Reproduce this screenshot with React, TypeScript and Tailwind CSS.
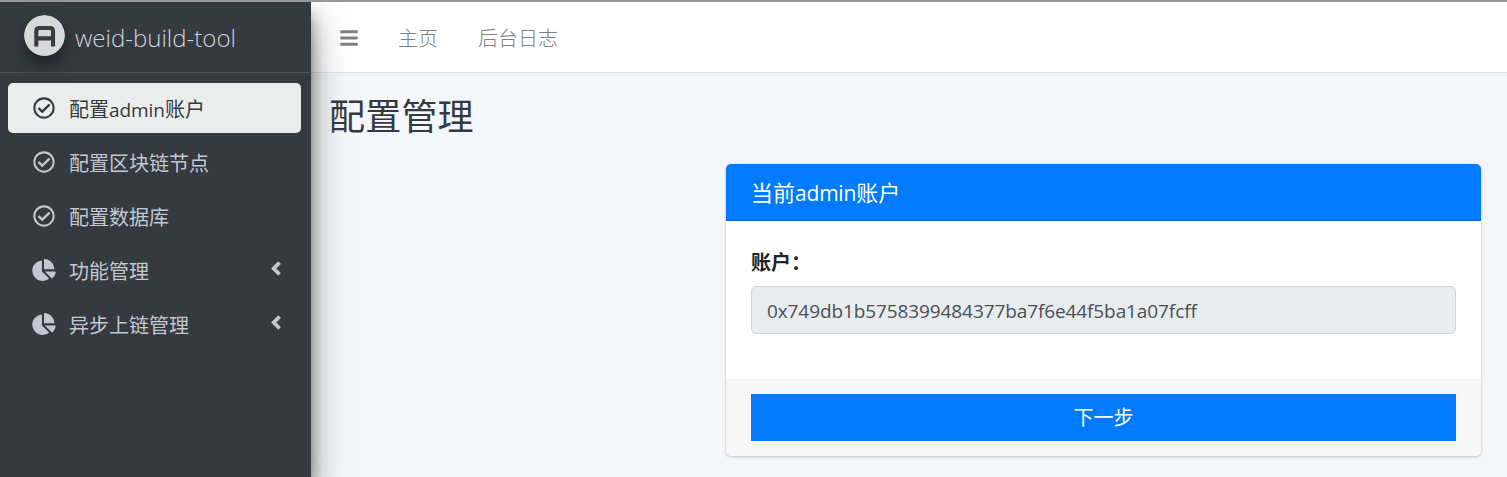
import { FaAngleLeft, FaBars, FaChartPie, FaRegCheckCircle } from 'react-icons/fa';
import type { ReactNode } from 'react';

type Item = { id: string; label: ReactNode; kind: 'check' | 'pie'; active?: boolean };

const items: Item[] = [
  {
    id: 'admin',
    label: (
      <>
        配置<span className="text-[19px] tracking-[-0.05px]">admin</span>账户
      </>
    ),
    kind: 'check',
    active: true,
  },
  { id: 'nodes', label: '配置区块链节点', kind: 'check' },
  { id: 'database', label: '配置数据库', kind: 'check' },
  { id: 'features', label: '功能管理', kind: 'pie' },
  { id: 'async', label: '异步上链管理', kind: 'pie' },
];

function Logo() {
  return (
    <svg
      viewBox="0 0 41 41"
      className="h-[41px] w-[41px] shrink-0 rounded-full shadow-[0_12px_25px_rgba(0,0,0,0.19),0_8px_8px_rgba(0,0,0,0.23)]"
    >
      <circle cx="20.5" cy="20.5" r="20.5" fill="#d7d8da" />
      <path
        d="M12.3 31.5V16q0-3 3-3h10.7q3 0 3 3v15.5M12.3 23.4h16.7"
        fill="none"
        stroke="#3a3c40"
        strokeWidth="4.1"
      />
    </svg>
  );
}

function SideItem({ label, kind, active }: Omit<Item, 'id'>) {
  return (
    <a
      className={
        active
          ? 'flex h-[50px] items-center rounded-[5px] bg-[#ebeded] pl-6 pr-[18px] text-[#343a40]'
          : 'flex h-[50px] items-center rounded-[5px] pl-6 pr-[18px] text-[#c2c7d0]'
      }
    >
      <span className="flex w-6 shrink-0 justify-center">
        {kind === 'check' ? (
          <FaRegCheckCircle className="h-[22px] w-[22px]" />
        ) : (
          <FaChartPie className="h-[22px] w-6" />
        )}
      </span>
      <span className="ml-[13px] mt-[3px] flex-1 text-[20px] leading-[30px]">{label}</span>
      {kind === 'pie' && <FaAngleLeft className="mb-[3px] h-[21px] w-[14px] stroke-current stroke-[18]" />}
    </a>
  );
}

export default function App() {
  return (
    <div className="flex h-[477px] w-[1507px] flex-col overflow-hidden bg-[#f4f6f9] font-['Open_Sans','Noto_Sans_CJK_SC',sans-serif] text-[20px] text-[#212529]">
      <div className="z-20 h-[2px] shrink-0 bg-[#999899]" />
      <div className="flex min-h-0 flex-1">
        <aside className="z-10 w-[311px] shrink-0 bg-[#343a40] shadow-[0_18px_35px_rgba(0,0,0,0.42),0_13px_13px_rgba(0,0,0,0.36)]">
          <div className="flex h-[71px] items-center border-b border-[#4b545c] pb-[3px] pl-6">
            <Logo />
            <span className="ml-[10px] mt-1 text-[24px] font-light leading-[38px] text-[#d0d2d4]">
              weid-build-tool
            </span>
          </div>
          <nav className="flex flex-col gap-1 pl-2 pr-[10px] pt-[10px]">
            {items.map(({ id, ...item }) => (
              <SideItem key={id} {...item} />
            ))}
          </nav>
        </aside>

        <main className="min-w-0 flex-1">
          <header className="flex h-[71px] items-center border-b border-[#dee2e6] bg-white pl-[29px] text-[#808080]">
            <FaBars className="mt-px h-5 w-[18px]" />
            <a className="ml-10 mt-[3px] font-light">主页</a>
            <a className="ml-10 mt-[3px] font-light">后台日志</a>
          </header>
          <h1 className="pl-[18px] pt-[21px] text-[36px] leading-[45px] tracking-[0.2px] text-[#343a40]">配置管理</h1>

          <section className="ml-[415px] mt-[25px] w-[755px] overflow-hidden rounded-[5px] bg-white shadow-[0_0_1px_rgba(0,0,0,0.125),0_1px_3px_rgba(0,0,0,0.2)]">
            <h3 className="h-[57px] border-b border-[#0069d9] bg-[#007bff] pl-[25px] pt-[14px] text-[22px] leading-[28px] text-white">
              当前<span className="text-[21px] tracking-[-0.2px]">admin</span>账户
            </h3>
            <div className="h-[158px] px-[25px] pt-[27px]">
              <label className="block text-[20px] font-bold leading-[30px]">账户：</label>
              <input
                readOnly
                value="0x749db1b5758399484377ba7f6e44f5ba1a07fcff"
                className="mt-2 block h-12 w-full rounded-[5px] border border-[#ced4da] bg-[#e9ecef] pl-[15px] pr-4 pt-px text-[19px] tracking-[-0.1px] text-[#495057] outline-none"
              />
            </div>
            <div className="h-[77px] bg-[#f7f7f7] px-[25px] pt-[15px]">
              <button className="block h-[47px] w-full bg-[#007bff] pt-px text-[20px] text-white">下一步</button>
            </div>
          </section>
        </main>
      </div>
    </div>
  );
}
